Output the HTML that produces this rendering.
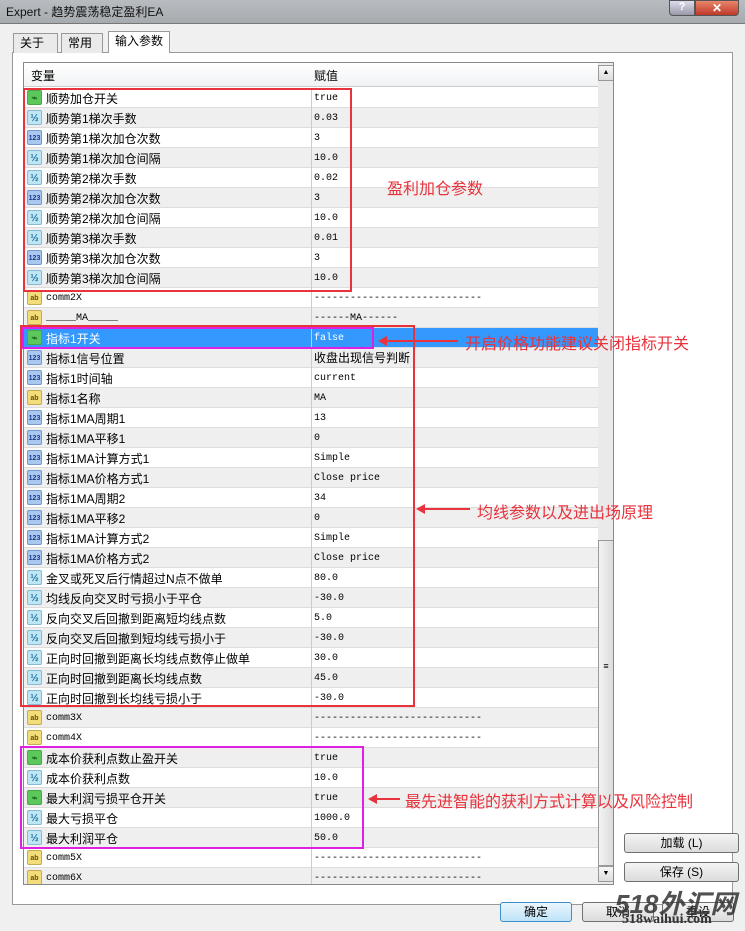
<!DOCTYPE html>
<html><head><meta charset="utf-8"><style>
*{margin:0;padding:0;box-sizing:border-box}
body{width:745px;height:931px;overflow:hidden;background:#f0f0f0;font-family:"Liberation Sans","Noto Sans CJK SC",sans-serif;font-size:12px;color:#000;position:relative}
.a{position:absolute}
.title{left:0;top:0;width:745px;height:24px;background:linear-gradient(#b8bcc0,#a6abb0);border-bottom:1px solid #777}
.tab{top:33px;height:20px;border:1px solid #999;border-bottom:none;background:#eaeaea;padding:0 6px;line-height:19px;font-size:12px}
.panel{left:12px;top:52px;width:721px;height:853px;background:#fff;border:1px solid #999}
.list{left:23px;top:62px;width:591px;height:823px;border:1px solid #888;background:#fff;overflow:hidden}
.row{position:absolute;left:0;width:574px;height:20px;border-bottom:1px solid #ddd}
.row.g{background:#efefef}
.row.sel{background:#3399ff;color:#fff}
.ic{position:absolute;left:3px;top:2px;width:15px;height:15px;border-radius:2px;font-size:7px;line-height:15px;text-align:center;font-family:"Liberation Sans",sans-serif;font-weight:bold}
.nm{position:absolute;left:22px;top:1px;height:20px;line-height:20px;white-space:nowrap;font-size:12px}
.vl{position:absolute;left:290px;top:1px;height:20px;line-height:20px;white-space:nowrap;font-family:"Liberation Mono","Noto Sans CJK SC",monospace;font-size:10px}
.vd{position:absolute;left:287px;top:0;width:1px;height:20px;background:#ccc}
.btn{height:20px;border:1px solid #707070;border-radius:3px;background:linear-gradient(#f4f4f4,#dcdcdc);text-align:center;line-height:18px;font-size:12px}
.box{position:absolute;border:2px solid #e8323c}
.mg{border-color:#e020e0}
.ann{position:absolute;color:#e8323c;font-size:16px;white-space:nowrap}
.arr{position:absolute;height:2px;background:#e8323c}
.arr:before{content:"";position:absolute;left:-2px;top:-4px;border-right:9px solid #e8323c;border-top:5px solid transparent;border-bottom:5px solid transparent}
</style></head><body>
<div class="a title"></div>
<div class="a" style="left:6px;top:3px;font-size:12px;color:#111">Expert - 趋势震荡稳定盈利EA</div>
<div class="a" style="left:669px;top:0;width:26px;height:16px;background:linear-gradient(#dde,#99a);border:1px solid #555;border-radius:0 0 0 4px;color:#fff;text-align:center;font-weight:bold;font-size:11px">?</div>
<div class="a" style="left:695px;top:0;width:44px;height:16px;background:linear-gradient(#e8866a,#c0392b);border:1px solid #555;border-radius:0 0 4px 0;color:#fff;text-align:center;font-weight:bold;font-size:12px">✕</div>
<div class="a panel"></div>
<div class="a tab" style="left:13px;width:45px">关于</div>
<div class="a tab" style="left:61px;width:42px">常用</div>
<div class="a tab" style="left:108px;top:31px;height:22px;width:62px;background:#fff">输入参数</div>
<div class="a list">
<div class="a" style="left:0;top:0;width:574px;height:24px;background:linear-gradient(#fff,#f1f2f4);border-bottom:1px solid #ccc"></div>
<div class="a" style="left:7px;top:4px;font-size:12px">变量</div>
<div class="a" style="left:290px;top:4px;font-size:12px">赋值</div>
<div id="rows"></div>
<div class="a" style="left:574px;top:0;width:16px;height:821px;background:#eaeaea"></div>
<div class="a" style="left:574px;top:2px;width:16px;height:16px;background:linear-gradient(#f6f6f6,#ddd);border:1px solid #999;font-size:7px;text-align:center;line-height:14px">▲</div>
<div class="a" style="left:574px;top:477px;width:16px;height:326px;background:linear-gradient(90deg,#f3f3f3,#dcdcdc);border:1px solid #999;font-size:9px;text-align:center;line-height:250px">≡</div>
<div class="a" style="left:574px;top:803px;width:16px;height:16px;background:linear-gradient(#f6f6f6,#ddd);border:1px solid #999;font-size:7px;text-align:center;line-height:14px">▼</div>
</div>
<div class="a btn" style="left:624px;top:833px;width:115px">加载 (L)</div>
<div class="a btn" style="left:624px;top:862px;width:115px">保存 (S)</div>
<div class="a btn" style="left:500px;top:902px;width:72px;border-color:#3c8fc8;background:linear-gradient(#eaf6fd,#bfe3f8)">确定</div>
<div class="a btn" style="left:582px;top:902px;width:72px">取消</div>
<div class="a btn" style="left:662px;top:902px;width:72px">重设</div>
<div class="a" style="left:615px;top:884px;font-size:26px;font-style:italic;font-weight:bold;color:#333;opacity:.85">518外汇网</div>
<div class="a" style="left:622px;top:912px;font-size:14px;font-weight:bold;color:#333;font-family:'Liberation Serif',serif">518waihui.com</div>
<div class="box" style="left:23px;top:88px;width:329px;height:204px"></div>
<div class="box" style="left:20px;top:325px;width:395px;height:382px"></div>
<div class="box mg" style="left:22px;top:327px;width:352px;height:22px"></div>
<div class="box mg" style="left:20px;top:746px;width:344px;height:103px"></div>
<div class="ann" style="left:387px;top:175px">盈利加仓参数</div>
<div class="arr" style="left:380px;top:340px;width:78px"></div>
<div class="ann" style="left:465px;top:330px">开启价格功能建议关闭指标开关</div>
<div class="arr" style="left:418px;top:508px;width:52px"></div>
<div class="ann" style="left:477px;top:499px">均线参数以及进出场原理</div>
<div class="arr" style="left:370px;top:798px;width:30px"></div>
<div class="ann" style="left:405px;top:788px">最先进智能的获利方式计算以及风险控制</div>
<script>
var D="----------------------------";
var R=[["b","顺势加仓开关","true"],["d","顺势第1梯次手数","0.03"],["i","顺势第1梯次加仓次数","3"],["d","顺势第1梯次加仓间隔","10.0"],["d","顺势第2梯次手数","0.02"],["i","顺势第2梯次加仓次数","3"],["d","顺势第2梯次加仓间隔","10.0"],["d","顺势第3梯次手数","0.01"],["i","顺势第3梯次加仓次数","3"],["d","顺势第3梯次加仓间隔","10.0"],
["s","comm2X",D],["s","_____MA_____","------MA------"],["b","指标1开关","false"],["i","指标1信号位置","<span style='font-size:12px'>收盘出现信号判断</span>"],["i","指标1时间轴","current"],["s","指标1名称","MA"],["i","指标1MA周期1","13"],["i","指标1MA平移1","0"],["i","指标1MA计算方式1","Simple"],["i","指标1MA价格方式1","Close price"],
["i","指标1MA周期2","34"],["i","指标1MA平移2","0"],["i","指标1MA计算方式2","Simple"],["i","指标1MA价格方式2","Close price"],["d","金叉或死叉后行情超过N点不做单","80.0"],["d","均线反向交叉时亏损小于平仓","-30.0"],["d","反向交叉后回撤到距离短均线点数","5.0"],["d","反向交叉后回撤到短均线亏损小于","-30.0"],["d","正向时回撤到距离长均线点数停止做单","30.0"],["d","正向时回撤到距离长均线点数","45.0"],
["d","正向时回撤到长均线亏损小于","-30.0"],["s","comm3X",D],["s","comm4X",D],["b","成本价获利点数止盈开关","true"],["d","成本价获利点数","10.0"],["b","最大利润亏损平仓开关","true"],["d","最大亏损平仓","1000.0"],["d","最大利润平仓","50.0"],["s","comm5X",D],["s","comm6X",D]];
var I={b:["#5cc85c","#1a6a1a","⌁"],d:["#bfe6f5","#1a6a9a","½"],i:["#a8c8f0","#1a3a8a","123"],s:["#f3dc7a","#6a4a00","ab"]};
var h="";R.forEach(function(r,k){var c=k==12?"row sel":(k%2?"row g":"row");var ic=I[r[0]];var big=r[0]=="b"||r[0]=="d";
var mono=/^[\x00-\x7f]+$/.test(r[1]);
h+='<div class="'+c+'" style="top:'+(25+k*20)+'px"><div class="ic" style="background:'+ic[0]+';color:'+ic[1]+';border:1px solid '+ic[1]+'55;font-size:'+(big?10:7)+'px">'+ic[2]+'</div><div class="nm"'+(mono?' style="font-family:Liberation Mono,monospace;font-size:10px"':'')+'>'+r[1]+'</div><div class="vd"></div><div class="vl">'+r[2]+'</div></div>';});
document.getElementById("rows").innerHTML=h;
</script>
</body></html>
